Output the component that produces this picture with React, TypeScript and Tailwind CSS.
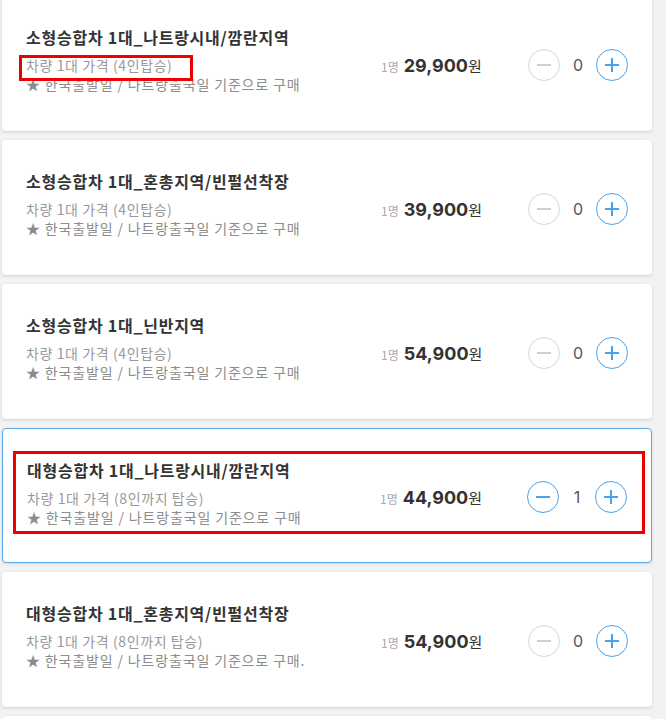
import React from "react";

type Item = {
  title: string;
  sub: string;
  note: string;
  price: string;
  count: number;
  active?: boolean;
  redSub?: boolean;
};

const items: Item[] = [
  { title: "소형승합차 1대_나트랑시내/깜란지역", sub: "차량 1대 가격 (4인탑승)", note: "★ 한국출발일 / 나트랑출국일 기준으로 구매", price: "29,900", count: 0, redSub: true },
  { title: "소형승합차 1대_혼총지역/빈펄선착장", sub: "차량 1대 가격 (4인탑승)", note: "★ 한국출발일 / 나트랑출국일 기준으로 구매", price: "39,900", count: 0 },
  { title: "소형승합차 1대_닌반지역", sub: "차량 1대 가격 (4인탑승)", note: "★ 한국출발일 / 나트랑출국일 기준으로 구매", price: "54,900", count: 0 },
  { title: "대형승합차 1대_나트랑시내/깜란지역", sub: "차량 1대 가격 (8인까지 탑승)", note: "★ 한국출발일 / 나트랑출국일 기준으로 구매", price: "44,900", count: 1, active: true },
  { title: "대형승합차 1대_혼총지역/빈펄선착장", sub: "차량 1대 가격 (8인까지 탑승)", note: "★ 한국출발일 / 나트랑출국일 기준으로 구매.", price: "54,900", count: 0 },
];

const KR = { fontFamily: '"Noto Sans CJK KR", "Noto Sans", sans-serif' };
const NUM = { fontFamily: 'Inter, "Noto Sans CJK KR", sans-serif' };

function Minus({ enabled }: { enabled: boolean }) {
  return (
    <div
      className={
        "w-[32px] h-[32px] rounded-full border flex items-center justify-center " +
        (enabled ? "border-[#4aa3ef]" : "border-[#d3d7dc]")
      }
    >
      <div className={"w-[14px] h-[2px] " + (enabled ? "bg-[#4aa3ef]" : "bg-[#cdd1d6]")} />
    </div>
  );
}

function Plus() {
  return (
    <div className="w-[32px] h-[32px] rounded-full border border-[#4aa3ef] flex items-center justify-center relative">
      <div className="w-[14px] h-[2px] bg-[#4aa3ef]" />
      <div className="absolute w-[2px] h-[14px] bg-[#4aa3ef]" />
    </div>
  );
}

function Card({ item }: { item: Item }) {
  return (
    <div
      className={
        "relative shrink-0 h-[135px] bg-white rounded-[4px] flex items-stretch pl-[24px] pr-[24px] " +
        (item.active
          ? "border border-[#5aa9e8] shadow-[0_1px_3px_rgba(0,0,0,0.10)]"
          : "shadow-[0_1px_3px_rgba(0,0,0,0.14)]")
      }
    >
      <div className="flex-1 pt-[30px]" style={KR}>
        <div className="text-[16px] leading-[22px] font-bold text-[#333] whitespace-nowrap tracking-[0.75px]">{item.title}</div>
        <div className="mt-[8px] text-[14px] leading-[19px] text-[#999] whitespace-nowrap tracking-[0.6px]">{item.sub}</div>
        <div className="text-[14px] leading-[19px] text-[#8c8c8c] whitespace-nowrap tracking-[0.85px]">{item.note}</div>
      </div>
      <div className="w-[147px] flex items-center pt-[3px]">
        <div className="flex items-baseline">
          <span className="text-[12px] text-[#aaa] mr-[5px]" style={KR}>1명</span>
          <span className="text-[18px] font-bold text-[#333]" style={NUM}>{item.price}</span>
          <span className="text-[15px] text-[#333]" style={KR}>원</span>
        </div>
      </div>
      <div className="w-[100px] flex items-center pt-[3px]">
        <Minus enabled={item.count > 0} />
        <div className="w-[36px] text-center text-[16px] text-[#555]" style={NUM}>{item.count}</div>
        <Plus />
      </div>
      {item.redSub && (
        <div className="absolute left-[17px] top-[59px] w-[174px] h-[26px] border-[3px] border-[#ee0000]" />
      )}
      {item.active && (
        <div className="absolute left-[10px] top-[22px] w-[632px] h-[83px] border-[3px] border-[#ee0000]" />
      )}
    </div>
  );
}

export default function App() {
  return (
    <div className="w-[666px] h-[719px] overflow-hidden bg-[#f1f2f4]">
      <div className="flex flex-col gap-[9px] pl-[2px] pr-[14px] mt-[-4px]">
        {items.map((it, i) => (
          <Card key={i} item={it} />
        ))}
        <div className="shrink-0 h-[135px] bg-white rounded-[4px] shadow-[0_1px_3px_rgba(0,0,0,0.14)]" />
      </div>
    </div>
  );
}
